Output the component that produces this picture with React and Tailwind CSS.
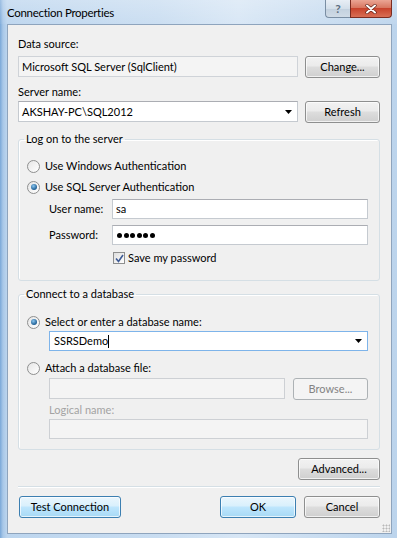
import React from "react";

function Btn({ children, blue, className = "", disabled }) {
  return (
    <div
      className={`flex items-center justify-center rounded-[3px] border h-[22px] ${
        blue
          ? "border-[#3c7fb1] bg-[linear-gradient(#eaf6fd_0%,#d9f0fc_45%,#bee6fd_50%,#a7d9f5_100%)] shadow-[inset_0_0_0_1px_rgba(255,255,255,0.7)]"
          : disabled
          ? "border-[#adb2b5] bg-[#f4f4f4] text-[#838383]"
          : "border-[#8e8f8f] bg-[linear-gradient(#f2f2f2_0%,#ebebeb_45%,#dddddd_50%,#cfcfcf_100%)] shadow-[inset_0_0_0_1px_rgba(255,255,255,0.7)]"
      } ${className}`}
    >
      {children}
    </div>
  );
}

function Radio({ checked }) {
  return (
    <div className="w-[13px] h-[13px] rounded-full border border-[#8e8f8f] bg-[linear-gradient(135deg,#e6e6e6,#ffffff)] flex items-center justify-center shrink-0">
      {checked && (
        <div className="w-[6px] h-[6px] rounded-full bg-[radial-gradient(circle_at_40%_35%,#8ac6f0,#1d5d92_70%)]" />
      )}
    </div>
  );
}

function Arrow() {
  return (
    <svg width="7" height="4" viewBox="0 0 7 4" className="shrink-0">
      <path d="M0 0 H7 L3.5 4 Z" fill="#000" />
    </svg>
  );
}

export default function App() {
  return (
    <div className="w-[397px] h-[538px] flex flex-col overflow-hidden bg-[linear-gradient(90deg,#7aa8d8_0px,#a9c8e8_3px,#bcd5ee_7px,#c9ddf1_40%,#d7e6f5_60%,#bcd4ec_100%)] font-['Segoe_UI','Lato',sans-serif] text-[11px] text-black leading-[16px]">
      {/* Title bar */}
      <div className="h-[24px] shrink-0 flex items-start bg-[linear-gradient(180deg,rgba(255,255,255,0.25),rgba(255,255,255,0.05))]">
        <div className="pl-[7px] pt-[5px] text-[11.5px] tracking-[-0.3px] leading-[16px] text-black">
          Connection Properties
        </div>
        <div className="ml-auto mr-[5px] flex">
          <div className="w-[25px] h-[18px] rounded-bl-[4px] border border-t-0 border-r-0 border-[#7a8ea3] bg-[linear-gradient(#e8eef5,#d4dfea_50%,#c2d0de_51%,#d0dbe6)] flex items-center justify-center text-[12px] font-bold text-[#5e6e80] leading-none">
            ?
          </div>
          <div className="w-[42px] h-[18px] rounded-br-[4px] border border-t-0 border-[#7b2c21] bg-[linear-gradient(#eba594,#d87761_45%,#c8432c_50%,#d86f55)] flex items-center justify-center">
            <svg width="12" height="10" viewBox="0 0 12 10">
              <path d="M2 1.5 L10 8.5 M10 1.5 L2 8.5" stroke="#5a1a10" strokeWidth="3.2" strokeLinecap="round" />
              <path d="M2 1.5 L10 8.5 M10 1.5 L2 8.5" stroke="#fff" strokeWidth="2" strokeLinecap="round" />
            </svg>
          </div>
        </div>
      </div>

      {/* Middle */}
      <div className="flex-1 flex pl-[7px] pr-[5px] pb-[4px]">
        <div className="flex-1 flex flex-col bg-[#f0f0f0] border border-[#8ea4bd] pl-[10px] pr-[11px] relative">
          <div className="mt-[11px]">Data source:</div>
          <div className="mt-[4px] flex h-[22px]">
            <div className="w-[280px] h-[21px] border border-[#cfd3d8] bg-[#f4f4f4] flex items-center pl-[3px]">
              Microsoft SQL Server (SqlClient)
            </div>
            <Btn className="ml-auto w-[75px]">Change...</Btn>
          </div>
          <div className="mt-[6px]">Server name:</div>
          <div className="mt-[1px] flex h-[22px]">
            <div className="w-[280px] h-[21px] border border-[#c5cad0] border-t-[#abadb3] bg-white flex items-center pl-[3px] pr-[5px]">
              <span className="flex-1">AKSHAY-PC\SQL2012</span>
              <Arrow />
            </div>
            <Btn className="ml-auto w-[75px]">Refresh</Btn>
          </div>

          {/* Group 1 */}
          <fieldset className="mt-[8px] border border-[#d5dfe5] rounded-[3px] shadow-[inset_1px_1px_0_#fff] pb-[14px] pl-[8px] pr-[11px]">
            <legend className="ml-[-3px] px-[2px]">Log on to the server</legend>
            <div className="mt-[11px] flex items-center gap-[5px] h-[16px]">
              <Radio />
              <span>Use Windows Authentication</span>
            </div>
            <div className="mt-[5px] flex items-center gap-[5px] h-[16px]">
              <Radio checked />
              <span>Use SQL Server Authentication</span>
            </div>
            <div className="mt-[4px] flex items-center h-[20px] pl-[22px]">
              <span className="w-[63px]">User name:</span>
              <div className="flex-1 h-[20px] border border-[#c5cad0] border-t-[#abadb3] bg-white flex items-center pl-[3px]">
                sa
              </div>
            </div>
            <div className="mt-[6px] flex items-center h-[20px] pl-[22px]">
              <span className="w-[63px]">Password:</span>
              <div className="flex-1 h-[20px] border border-[#c5cad0] border-t-[#abadb3] bg-white flex items-center pl-[4px] gap-[1.5px]">
                {[0, 1, 2, 3, 4, 5].map((i) => (
                  <span key={i} className="w-[5px] h-[5px] rounded-full bg-black" />
                ))}
              </div>
            </div>
            <div className="mt-[5px] flex items-center h-[16px] pl-[86px] gap-[3px]">
              <div className="w-[12px] h-[12px] border border-[#8e8f8f] bg-[linear-gradient(135deg,#dedede,#ffffff)] flex items-center justify-center">
                <svg width="9" height="9" viewBox="0 0 9 9">
                  <path d="M1 4.5 L3.5 7.5 L8 1" fill="none" stroke="#3d5a95" strokeWidth="1.6" />
                </svg>
              </div>
              <span>Save my password</span>
            </div>
          </fieldset>

          {/* Group 2 */}
          <fieldset className="mt-[5px] border border-[#d5dfe5] rounded-[3px] shadow-[inset_1px_1px_0_#fff] pb-[10px] pl-[8px] pr-[11px]">
            <legend className="ml-[-3px] px-[2px]">Connect to a database</legend>
            <div className="mt-[12px] flex items-center gap-[5px] h-[16px]">
              <Radio checked />
              <span>Select or enter a database name:</span>
            </div>
            <div className="mt-[1px] ml-[22px] h-[20px] border border-[#7eb4ea] bg-white flex items-center pl-[4px] pr-[5px]">
              <span>SSRSDemo</span>
              <span className="w-[1px] h-[13px] bg-black" />
              <span className="flex-1" />
              <Arrow />
            </div>
            <div className="mt-[9px] flex items-center gap-[5px] h-[16px]">
              <Radio />
              <span>Attach a database file:</span>
            </div>
            <div className="mt-[2px] ml-[22px] flex h-[21px]">
              <div className="w-[236px] h-[21px] border border-[#cdd0d4] bg-[#f4f4f4]" />
              <Btn disabled className="ml-auto w-[75px] h-[21px]">Browse...</Btn>
            </div>
            <div className="mt-[3px] ml-[22px] text-[#a3a3a3]">Logical name:</div>
            <div className="mt-[1px] ml-[22px] h-[20px] border border-[#cdd0d4] bg-[#f4f4f4]" />
          </fieldset>

          <div className="mt-[8px] flex justify-end">
            <Btn className="w-[82px]">Advanced...</Btn>
          </div>
          <div className="mt-[6px] h-[2px] border-t border-[#d5dfe5] border-b border-b-white" />
          <div className="mt-[8px] flex">
            <Btn blue className="w-[102px] ml-[1px]">Test Connection</Btn>
            <Btn blue className="ml-auto w-[76px]">OK</Btn>
            <Btn className="ml-[8px] w-[76px]">Cancel</Btn>
          </div>
          <div className="absolute right-[1px] bottom-[1px] w-[8px] h-[8px] bg-[radial-gradient(circle,#b8b8b8_0.8px,transparent_1.2px)] bg-[length:3px_3px]" />
        </div>
      </div>
    </div>
  );
}
